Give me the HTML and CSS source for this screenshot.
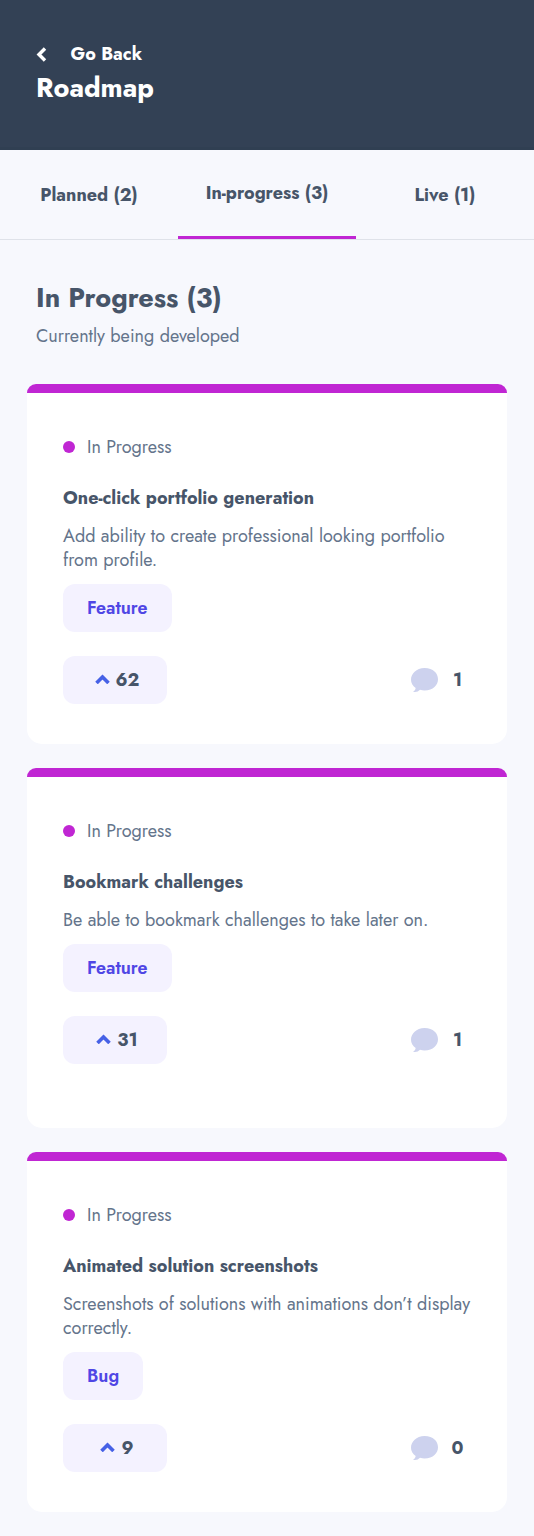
FILE: index.html
```html
<!DOCTYPE html>
<html lang="en">
<head>
<meta charset="utf-8">
<meta name="viewport" content="width=device-width, initial-scale=1">
<title>Roadmap</title>
<link rel="stylesheet" href="styles.css">
</head>
<body>
<svg class="sprite" aria-hidden="true">
  <symbol id="up" viewBox="0 0 10 7"><path d="M1 6l4-4 4 4" fill="none" stroke="#4661e6" stroke-width="2.4"/></symbol>
  <symbol id="comment" viewBox="0 0 18 16"><path d="M2.62 16H1.346l.902-.91c.486-.491.79-1.13.872-1.823C1.036 11.887 0 9.89 0 7.794 0 3.928 3.52 0 9.03 0 14.87 0 18 3.615 18 7.455c0 3.866-3.164 7.478-8.97 7.478-1.017 0-2.078-.137-3.025-.388A4.705 4.705 0 012.62 16z" fill="#cdd2ee"/></symbol>
</svg>
<header class="header">
  <a class="back"><svg class="back-icon" viewBox="0 0 7 10"><path d="M6 9L2 5l4-4" fill="none" stroke="#fff" stroke-width="2.3"/></svg><span>Go Back</span></a>
  <h1 class="page-title">Roadmap</h1>
</header>
<nav class="tabs">
  <a class="tab">Planned (2)</a>
  <a class="tab tab-active">In-progress (3)</a>
  <a class="tab">Live (1)</a>
</nav>
<main class="main">
  <div class="intro">
    <h2 class="heading">In Progress (3)</h2>
    <p class="subheading">Currently being developed</p>
  </div>
  <article class="card">
    <div class="status"><span class="dot"></span><span>In Progress</span></div>
    <h3 class="title">One-click portfolio generation</h3>
    <p class="desc">Add ability to create professional looking portfolio from profile.</p>
    <div class="tag">Feature</div>
    <div class="actions">
      <button class="vote"><svg class="up"><use href="#up"/></svg><span>62</span></button>
      <div class="comments"><svg class="bubble"><use href="#comment"/></svg><span class="count">1</span></div>
    </div>
  </article>
  <article class="card">
    <div class="status"><span class="dot"></span><span>In Progress</span></div>
    <h3 class="title">Bookmark challenges</h3>
    <p class="desc">Be able to bookmark challenges to take later on.</p>
    <div class="tag">Feature</div>
    <div class="actions">
      <button class="vote"><svg class="up"><use href="#up"/></svg><span>31</span></button>
      <div class="comments"><svg class="bubble"><use href="#comment"/></svg><span class="count">1</span></div>
    </div>
  </article>
  <article class="card">
    <div class="status"><span class="dot"></span><span>In Progress</span></div>
    <h3 class="title">Animated solution screenshots</h3>
    <p class="desc">Screenshots of solutions with animations don’t display correctly.</p>
    <div class="tag tag-bug">Bug</div>
    <div class="actions">
      <button class="vote"><svg class="up"><use href="#up"/></svg><span>9</span></button>
      <div class="comments"><svg class="bubble"><use href="#comment"/></svg><span class="count">0</span></div>
    </div>
  </article>
</main>
</body>
</html>
```
FILE: styles.css
```css
* { box-sizing: border-box; margin: 0; padding: 0; }
body { background: #f7f8fd; font: 400 18px/24px Jost, Lato, sans-serif; color: #64748b; }
.sprite { position: absolute; width: 0; height: 0; }
.header { height: 150px; background: #334155; border-bottom: 3px solid #303f52; padding: 42px 36px 0; color: #fff; }
.back { display: flex; align-items: center; font-weight: 700; }
.back-icon { width: 10.5px; height: 15px; margin-right: 24px; overflow: visible; }
.page-title { font-size: 27px; line-height: 36px; margin-top: 4px; font-weight: 700; }
.tabs { display: grid; grid-template-columns: repeat(3, 1fr); height: 90px; border-bottom: 1px solid #dfe2e9; }
.tab { display: flex; align-items: center; justify-content: center; font-weight: 700; color: #475569; }
.tab-active { border-bottom: 3px solid #c026d3; }
.main { padding: 40px 27px 24px; }
.intro { padding: 0 9px; height: 104px; }
.heading { font-size: 27px; line-height: 36px; color: #475569; font-weight: 700; }
.subheading { margin-top: 8px; }
.card { height: 360px; background: #fff; border-top: 9px solid #c026d3; border-radius: 9px 9px 15px 15px; padding: 42px 36px 0; margin-bottom: 24px; }
.card:last-child { margin-bottom: 0; }
.status { display: flex; align-items: center; gap: 12px; height: 24px; }
.dot { width: 12px; height: 12px; border-radius: 50%; background: #c026d3; }
.title { margin-top: 27px; font-size: 18px; line-height: 24px; font-weight: 700; color: #475569; }
.desc { margin-top: 14px; }
.tag { width: 109px; height: 48px; margin-top: 12px; padding-left: 24px; border-radius: 12px; background: #f4f2ff; color: #4f46e5; font-weight: 600; line-height: 48px; }
.tag-bug { width: 80px; }
.actions { display: flex; justify-content: space-between; align-items: center; margin-top: 24px; }
.vote { display: flex; align-items: center; justify-content: center; gap: 6px; width: 104px; height: 48px; padding-left: 4px; border: 0; border-radius: 12px; background: #f4f2ff; font: inherit; font-weight: 700; color: #475569; }
.up { width: 15px; height: 10.5px; margin-bottom: 2px; }
.comments { display: flex; align-items: center; gap: 6px; }
.bubble { width: 27px; height: 24px; }
.count { width: 27px; text-align: center; font-weight: 700; color: #475569; }
```
